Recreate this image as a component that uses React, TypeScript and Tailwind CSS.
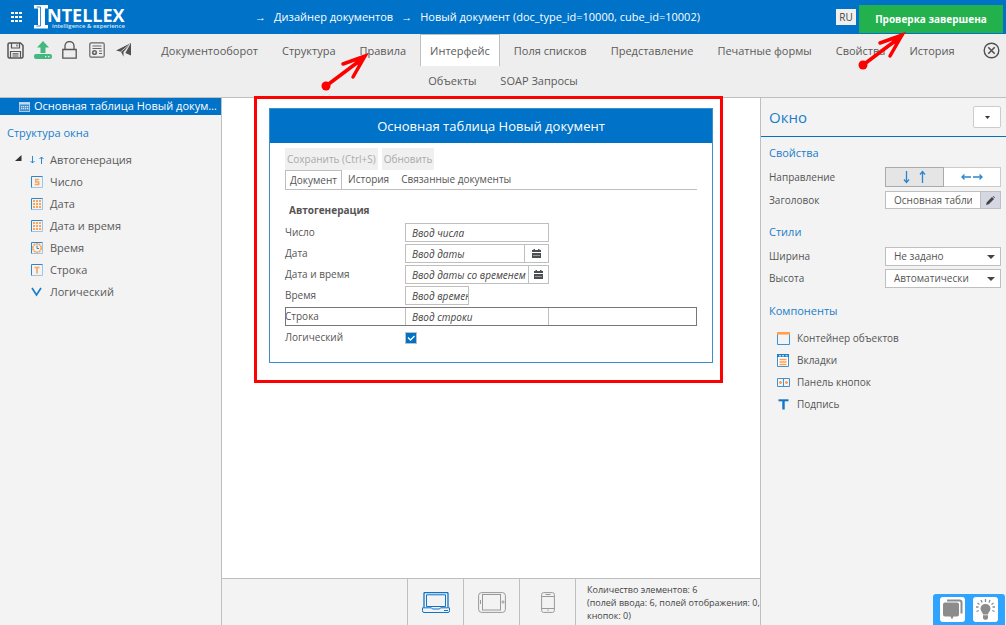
import type { ReactNode } from 'react';

type IconProps = { className?: string };

type TreeItem = { label: string; icon: ReactNode };

function AppsIcon() {
  return (
    <svg width="12" height="10" viewBox="0 0 12 10" fill="#fff" aria-hidden="true">
      {[0, 4, 8].map((x) => [0, 4, 8].map((y) => <rect key={`${x}-${y}`} x={x} y={y} width="3" height="2" />))}
    </svg>
  );
}

function Logo() {
  return (
    <svg width="93" height="26" viewBox="0 0 93 26" role="img" aria-label="Intellex" className="shrink-0">
      <path d="M0 1h14v3.500h-3v16.500h3v3.500H0v-3.500h4V4.500H0z" fill="#fff" />
      <path d="M2.500 3h4v19h-4" fill="none" stroke="#0072c8" strokeWidth="0.800" />
      <text x="13" y="18" fill="#fff" fontFamily="'Open Sans', sans-serif" fontWeight="700" fontSize="18">
        NTELLEX
      </text>
      <text x="18" y="24" fill="#d5e8f7" fontFamily="'Open Sans', sans-serif" fontWeight="600" fontSize="6">
        intelligence &amp; experience
      </text>
    </svg>
  );
}

function SaveIcon() {
  return (
    <svg width="17" height="17" viewBox="0 0 17 17" fill="none" stroke="#555" strokeWidth="1.5" aria-hidden="true">
      <path d="M1 2.500a1.500 1.500 0 0 1 1.500-1.500h11L16 3.500v11a1.500 1.500 0 0 1-1.500 1.500h-12A1.500 1.500 0 0 1 1 14.500z" />
      <path d="M4.500 1v5h8V1M10 2.500v2M3.500 16V9.500h10V16M5.500 11.800h6M5.500 14h6" strokeWidth="1.200" />
    </svg>
  );
}

function UploadIcon() {
  return (
    <svg width="18" height="18" viewBox="0 0 18 18" fill="#43b97f" aria-hidden="true">
      <path d="M9 0l6 6.500h-3.500V12h-5V6.500H3z" />
      <rect x="0" y="13" width="18" height="5" rx="2" />
      <path d="M11 15h1.500v1.200H11zM14 15h1.500v1.200H14z" fill="#eee" />
    </svg>
  );
}

function LockIcon() {
  return (
    <svg width="15" height="18" viewBox="0 0 15 18" fill="none" stroke="#555" strokeWidth="1.300" aria-hidden="true">
      <path d="M0.800 8.500h13.400v8.700H0.800zM3 8.500V5a4.500 4.500 0 0 1 9 0v3.500" />
    </svg>
  );
}

function CertificateIcon() {
  return (
    <svg width="16" height="16" viewBox="0 0 16 16" fill="none" stroke="#666" strokeWidth="1.200" aria-hidden="true">
      <rect x="0.800" y="0.800" width="14.400" height="14.400" rx="1.500" />
      <path d="M3.500 4h9M3.500 6.500h9M10 9h3M10 11.500h3" />
      <circle cx="5.500" cy="10.500" r="1.800" strokeWidth="1.600" />
    </svg>
  );
}

function SendIcon() {
  return (
    <svg width="15" height="14" viewBox="0 0 15 14" aria-hidden="true">
      <path d="M15 0v12.500L9.300 10 15 0 7.500 9v4.800L5 8.800 0 7.500z" fill="#505050" />
      <path d="M5 8.600L14 1" stroke="#eee" strokeWidth="0.800" />
    </svg>
  );
}

function CloseIcon() {
  return (
    <svg width="17" height="17" viewBox="0 0 17 17" fill="none" stroke="#505050" strokeWidth="1.400" aria-hidden="true">
      <circle cx="8.500" cy="8.500" r="7.300" />
      <path d="M5.300 5.300l6.400 6.400M11.700 5.300l-6.400 6.400" strokeWidth="1.600" />
    </svg>
  );
}

function Pointer({ className }: IconProps) {
  return (
    <svg width="52" height="42" viewBox="0 0 52 42" className={className} aria-hidden="true">
      <circle cx="6" cy="36" r="4.500" fill="#f00" />
      <path d="M6 36L42 9M23 14L45 6 33 27" fill="none" stroke="#f00" strokeWidth="3.500" strokeLinecap="round" />
      <path d="M48 4L33 9l6 8z" fill="#f00" />
    </svg>
  );
}

function FieldBox({ children }: { children?: ReactNode }) {
  return (
    <svg width="12" height="12" viewBox="0 0 12 12" fill="none" aria-hidden="true">
      <path d="M11.500 0.500v11h-11" stroke="#9cc6e8" />
      <path d="M0.500 11.500v-11h11" stroke="#2a86cf" />
      {children}
    </svg>
  );
}

function DotsIcon() {
  return (
    <FieldBox>
      {[2, 5, 8].map((x) => [2, 5, 8].map((y) => <rect key={`${x}-${y}`} x={x} y={y} width="2" height="2" fill="#f9a65a" />))}
    </FieldBox>
  );
}

function NumberIcon() {
  return (
    <FieldBox>
      <path d="M8.200 3.500H4.700v2.500h3v2.500H3.800" stroke="#f9a65a" strokeWidth="1.500" />
    </FieldBox>
  );
}

function ClockIcon() {
  return (
    <FieldBox>
      <circle cx="6" cy="6" r="4.200" stroke="#f9a65a" strokeWidth="1.800" strokeDasharray="2 0.600" />
      <path d="M6 3.500V6.500h2" stroke="#2a86cf" />
    </FieldBox>
  );
}

function StringIcon() {
  return (
    <FieldBox>
      <path d="M3.500 3.500h5M6 3v6.500" stroke="#f9a65a" strokeWidth="1.700" />
    </FieldBox>
  );
}

function CheckVIcon() {
  return (
    <svg width="12" height="12" viewBox="0 0 12 12" fill="none" stroke="#1a7ecb" strokeWidth="1.700" aria-hidden="true">
      <path d="M1 2l4.500 7L10 2" />
    </svg>
  );
}

function TableIcon() {
  return (
    <svg width="11" height="10" viewBox="0 0 11 10" className="shrink-0" aria-hidden="true">
      <rect x="0.500" y="0.500" width="10" height="9" fill="#3d8fd2" stroke="#a9c9e8" />
      <path d="M0 1.500h11" stroke="#c9dcef" strokeWidth="2" />
      {[2, 4, 6, 8].map((x) => [4, 6].map((y) => <rect key={`${x}-${y}`} x={x} y={y} width="1.300" height="1.300" fill="#cfe2f3" />))}
    </svg>
  );
}

function CalendarIcon() {
  return (
    <svg width="9" height="10" viewBox="0 0 9 10" fill="#4a4f52" aria-hidden="true">
      <path d="M1.500 0h1.500v1h3V0h1.500v1H9v2H0V1h1.500zM0 4h9v5H0z" />
      <path d="M1 6.500h7" stroke="#ccc" strokeWidth="0.600" />
    </svg>
  );
}

function ContainerIcon() {
  return (
    <svg width="13" height="13" viewBox="0 0 13 13" fill="none" aria-hidden="true">
      <path d="M0.500 2v10.500h12V2" stroke="#3d92d5" />
      <path d="M0 1.300h13" stroke="#ff9f4f" strokeWidth="2.600" />
    </svg>
  );
}

function TabsIcon() {
  return (
    <svg width="13" height="13" viewBox="0 0 13 13" fill="none" aria-hidden="true">
      <path d="M0.500 0.500h11v12h-11z" stroke="#3d92d5" fill="#fff" />
      <path d="M0 1.500h12" stroke="#1a7ecb" strokeWidth="3" />
      <path d="M2 1.800h2M5 1.800h2M8.500 1.800h2" stroke="#fff" />
      <path d="M2.500 5.500h7M2.500 8h7M2.500 10.500h7" stroke="#ff9f4f" strokeWidth="1.300" />
    </svg>
  );
}

function ButtonsIcon() {
  return (
    <svg width="13" height="9" viewBox="0 0 13 9" fill="none" stroke="#3d92d5" aria-hidden="true">
      <path d="M0.500 0.500h12v8h-12zM6.500 0.500v8" />
      <path d="M3.500 3v3M2 4.500h3M9.500 3v3M8 4.500h3" stroke="#ff9f4f" strokeWidth="1.600" />
    </svg>
  );
}

function CaptionIcon() {
  return (
    <svg width="13" height="11" viewBox="0 0 13 11" fill="none" stroke="#1274c7" aria-hidden="true">
      <path d="M1.500 1.300h10" strokeWidth="2" />
      <path d="M6.500 1v9.500" strokeWidth="2.400" />
    </svg>
  );
}

function LaptopIcon() {
  return (
    <svg width="28" height="21" viewBox="0 0 28 21" fill="none" stroke="#0f73c6" aria-hidden="true">
      <path d="M2 15.500v-14q0-1 1-1h22q1 0 1 1v14" strokeWidth="1.300" />
      <path d="M4.500 2.800h19v11.700h-19z" />
      <path d="M0.500 15.800h9l1 1.200h7l1-1.200h9v3q0 1.700-1.500 1.700H2q-1.500 0-1.500-1.700z" />
      <path d="M22 18.500h4" />
    </svg>
  );
}

function TabletIcon() {
  return (
    <svg width="28" height="21" viewBox="0 0 28 21" fill="none" stroke="#999" aria-hidden="true">
      <rect x="0.600" y="0.600" width="26.800" height="19.800" rx="3" />
      <rect x="4.500" y="2.500" width="18" height="15.500" />
      <path d="M2.500 8v4" />
      <circle cx="25" cy="10" r="1.100" />
    </svg>
  );
}

function PhoneIcon() {
  return (
    <svg width="14" height="21" viewBox="0 0 14 21" fill="none" stroke="#999" aria-hidden="true">
      <rect x="0.600" y="0.600" width="12.800" height="19.800" rx="2" />
      <path d="M1 4.500h12M1 16.500h12M4.500 2.500h5M7 17.500v1.500" />
    </svg>
  );
}

function ChatIcon() {
  return (
    <svg width="23" height="23" viewBox="0 0 23 23" aria-hidden="true">
      <path d="M6 2.500h12.500q2 0 2 2v11" fill="none" stroke="#8c8c8c" strokeWidth="2" />
      <path d="M4 4.500h12q2 0 2 2v10q0 2-2 2h-3.500L11 21.500 9.500 18.500H4q-2 0-2-2v-10q0-2 2-2z" fill="#8c8c8c" />
    </svg>
  );
}

function BulbIcon() {
  return (
    <svg width="23" height="23" viewBox="0 0 23 23" aria-hidden="true">
      <path d="M11.500 6a4.800 4.800 0 0 1 5 4.800c0 2.500-2.300 3.400-2.500 5.700H9c-0.200-2.300-2.500-3.200-2.500-5.700a4.800 4.800 0 0 1 5-4.800zM9 17.200h5v3.300l-1.500 1.300h-2L9 20.500z" fill="#8c8c8c" />
      <path d="M11.500 1v3M7 2l1 2.500M16 2l-1 2.500M3.500 5l2 1.500M19.500 5l-2 1.500M2 9h2.500M18.500 9H21M2.500 13.500l2.200-1M20.500 13.500l-2.200-1" stroke="#8c8c8c" strokeWidth="1.300" />
    </svg>
  );
}

const tabs = [
  'Документооборот',
  'Структура',
  'Правила',
  'Интерфейс',
  'Поля списков',
  'Представление',
  'Печатные формы',
  'Свойства',
  'История',
];

const tree: TreeItem[] = [
  { label: 'Число', icon: <NumberIcon /> },
  { label: 'Дата', icon: <DotsIcon /> },
  { label: 'Дата и время', icon: <DotsIcon /> },
  { label: 'Время', icon: <ClockIcon /> },
  { label: 'Строка', icon: <StringIcon /> },
  { label: 'Логический', icon: <CheckVIcon /> },
];

const components: TreeItem[] = [
  { label: 'Контейнер объектов', icon: <ContainerIcon /> },
  { label: 'Вкладки', icon: <TabsIcon /> },
  { label: 'Панель кнопок', icon: <ButtonsIcon /> },
  { label: 'Подпись', icon: <CaptionIcon /> },
];

const tools = [
  { label: 'Сохранить', icon: <SaveIcon /> },
  { label: 'Загрузить', icon: <UploadIcon /> },
  { label: 'Заблокировать', icon: <LockIcon /> },
  { label: 'Сертификат', icon: <CertificateIcon /> },
  { label: 'Отправить', icon: <SendIcon /> },
];

function Header() {
  return (
    <header className="relative flex h-[34px] items-center bg-[#0072c8] text-white">
      <button type="button" aria-label="Меню" className="mr-[11px] ml-[11px]">
        <AppsIcon />
      </button>
      <Logo />
      <nav className="flex flex-1 justify-center gap-2 pr-2 text-[11px] font-medium whitespace-nowrap">
        <span>→</span>
        <a href="#designer">Дизайнер документов</a>
        <span>→</span>
        <a href="#document">Новый документ (doc_type_id=10000, cube_id=10002)</a>
      </nav>
      <button type="button" className="mr-[150px] h-4 w-5 bg-[#f0f0f0] text-[10px] leading-4 text-[#444]">
        RU
      </button>
      <div role="status" className="absolute top-[5px] right-[3px] flex h-7 w-36 items-center justify-center bg-[#22b14c] text-[10px] font-bold whitespace-nowrap">
        Проверка завершена
      </div>
    </header>
  );
}

function Toolbar() {
  return (
    <div className="border-b border-[#bfbfbf] bg-[#eee] text-[11px] whitespace-nowrap text-[#5a5a5a]">
      <div className="flex h-8 items-center">
        <div className="flex w-[140px] shrink-0 items-center pl-[2px]">
          {tools.map((tool) => (
            <button key={tool.label} type="button" aria-label={tool.label} className="flex w-[27px] justify-center">
              {tool.icon}
            </button>
          ))}
        </div>
        <ul className="flex flex-1 justify-center gap-1">
          {tabs.map((tab) => (
            <li key={tab} className="relative">
              <a
                href={`#${tab}`}
                className={
                  tab === 'Интерфейс'
                    ? 'flex h-8 items-center border border-b-0 border-[#bfbfbf] bg-white px-[9px] pt-px'
                    : 'flex h-8 items-center px-[10px] pt-[2px]'
                }
              >
                {tab}
              </a>
              {tab === 'Правила' && <Pointer className="pointer-events-none absolute top-[16px] left-[-30px] z-10" />}
              {tab === 'Свойства' && <Pointer className="pointer-events-none absolute top-[-5px] left-[31px] z-10" />}
            </li>
          ))}
        </ul>
        <button type="button" aria-label="Закрыть" className="flex w-[30px] shrink-0 justify-center">
          <CloseIcon />
        </button>
      </div>
      <div className="flex h-[31px] items-center justify-center gap-6">
        <a href="#objects">Объекты</a>
        <a href="#soap">SOAP Запросы</a>
      </div>
    </div>
  );
}

function Sidebar() {
  return (
    <aside className="w-[222px] shrink-0 border-r border-[#bfbfbf] bg-[#f3f3f3] text-[11px]">
      <div className="flex h-[17px] items-center gap-1 bg-[#0072c8] pl-[19px] text-white">
        <TableIcon />
        <span className="truncate">Основная таблица Новый документ</span>
      </div>
      <h2 className="mt-2 pl-[7px] leading-5 text-[#1a7ecb]">Структура окна</h2>
      <ul className="mt-[6px] text-[#5a5a5a]">
        <li className="flex h-[22px] items-center pl-[15px]">
          <svg width="7" height="7" viewBox="0 0 7 7" className="mb-1" aria-hidden="true">
            <path d="M6.500 0v6H0z" fill="#333" />
          </svg>
          <svg width="14" height="8" viewBox="0 0 14 8" className="mr-[6px] ml-2" fill="none" stroke="#2a86cf" aria-hidden="true">
            <path d="M2.500 0v7M0.500 5l2 2 2-2M11.500 8V1M9.500 3l2-2 2 2" />
          </svg>
          Автогенерация
        </li>
        {tree.map((item) => (
          <li key={item.label} className="flex h-[22px] items-center gap-[7px] pl-[31px]">
            {item.icon}
            {item.label}
          </li>
        ))}
      </ul>
    </aside>
  );
}

const inputClass = 'h-[19px] border border-[#bfbfbf] bg-white pl-[6px] italic placeholder:text-[#444] placeholder:opacity-100';

function DateField({ id, placeholder, narrow }: { id: string; placeholder: string; narrow?: boolean }) {
  return (
    <div className="flex w-36">
      <input id={id} placeholder={placeholder} className={`${inputClass} min-w-0 flex-1`} />
      <button
        type="button"
        aria-label="Выбрать дату"
        className={`flex h-[19px] items-center justify-center border border-l-0 border-[#bfbfbf] ${narrow ? 'w-5' : 'w-6'}`}
      >
        <CalendarIcon />
      </button>
    </div>
  );
}

function FormRow({ id, label, children }: { id: string; label: string; children: ReactNode }) {
  return (
    <div className="flex h-[19px] items-center">
      <label htmlFor={id} className="w-[120px] shrink-0">
        {label}
      </label>
      {children}
    </div>
  );
}

function FormPreview() {
  return (
    <div className="relative mx-[47px] mt-[10px] border border-[#3a8fd0] text-[10px] text-[#555]">
      {/* selection frame around the whole window */}
      <div className="pointer-events-none absolute -top-[13px] -right-[11px] -bottom-[21px] -left-4 border-[3px] border-[#f00]" />
      <h1 className="flex h-[34px] items-center justify-center bg-[#0072c8] pt-[2px] text-[13px] text-white">
        Основная таблица Новый документ
      </h1>
      <div className="px-[15px] pt-[5px] pb-[15px]">
        <div className="flex gap-1">
          <button type="button" disabled className="h-[22px] bg-[#f0f0f0] px-[2px] text-[#aaa]">
            Сохранить (Ctrl+S)
          </button>
          <button type="button" disabled className="h-[22px] bg-[#f0f0f0] px-[2px] text-[#aaa]">
            Обновить
          </button>
        </div>
        <div className="flex h-5 items-stretch border-b border-[#bfbfbf]">
          <button type="button" className="border border-b-0 border-[#bfbfbf] px-1">
            Документ
          </button>
          <button type="button" className="px-[6px]">
            История
          </button>
          <button type="button" className="px-[6px]">
            Связанные документы
          </button>
        </div>
        <h2 className="mt-3 mb-1 pl-1 leading-[17px] font-bold">Автогенерация</h2>
        <form className="flex flex-col gap-[2px]">
          <FormRow id="number" label="Число">
            <input id="number" placeholder="Ввод числа" className={`${inputClass} w-36`} />
          </FormRow>
          <FormRow id="date" label="Дата">
            <DateField id="date" placeholder="Ввод даты" />
          </FormRow>
          <FormRow id="datetime" label="Дата и время">
            <DateField id="datetime" placeholder="Ввод даты со временем" narrow />
          </FormRow>
          <FormRow id="time" label="Время">
            <input id="time" placeholder="Ввод времени" className={`${inputClass} w-16`} />
          </FormRow>
          <div className="outline-1 -outline-offset-1 outline-[#777]">
            <FormRow id="string" label="Строка">
              <input id="string" placeholder="Ввод строки" className={`${inputClass} w-36`} />
            </FormRow>
          </div>
          <FormRow id="bool" label="Логический">
            <span className="relative flex">
              <input
                id="bool"
                type="checkbox"
                defaultChecked
                className="peer h-3 w-3 appearance-none border border-[#bfbfbf] bg-white checked:bg-[#0072c8]"
              />
              <svg viewBox="0 0 12 12" className="pointer-events-none absolute inset-0 hidden peer-checked:block" fill="none" stroke="#fff" aria-hidden="true">
                <path d="M3 5.500l2.500 2.500 4-4" strokeWidth="1.300" />
              </svg>
            </span>
          </FormRow>
        </form>
      </div>
    </div>
  );
}

function DeviceBar() {
  return (
    <footer className="flex h-[47px] border-t border-[#bfbfbf] bg-[#f3f3f3]">
      <div className="flex-1" />
      <button type="button" aria-label="Компьютер" className="flex w-14 items-center justify-center border-l border-[#bfbfbf]">
        <LaptopIcon />
      </button>
      <button type="button" aria-label="Планшет" className="flex w-14 items-center justify-center border-l border-[#bfbfbf]">
        <TabletIcon />
      </button>
      <button type="button" aria-label="Телефон" className="flex w-14 items-center justify-center border-l border-[#bfbfbf]">
        <PhoneIcon />
      </button>
      <p className="w-[185px] border-l border-[#bfbfbf] pt-1 pl-[11px] text-[9px] leading-[13px] text-[#444]">
        Количество элементов: 6<br />
        (полей ввода: 6, полей отображения: 0, кнопок: 0)
      </p>
    </footer>
  );
}

function SelectRow({ id, label, value }: { id: string; label: string; value: string }) {
  return (
    <div className="flex h-[19px] items-center justify-between">
      <label htmlFor={id}>{label}</label>
      <div className="relative">
        <select id={id} className="block h-[19px] w-[116px] appearance-none border border-[#bfbfbf] bg-white pl-2">
          <option>{value}</option>
        </select>
        <svg width="8" height="4" viewBox="0 0 8 4" className="pointer-events-none absolute top-2 right-[6px]" fill="#444" aria-hidden="true">
          <path d="M0 0h8L4 4z" />
        </svg>
      </div>
    </div>
  );
}

function PropertiesPanel() {
  return (
    <aside className="w-[246px] shrink-0 border-l border-[#bfbfbf] bg-[#f3f3f3] text-[10px] text-[#555]">
      <div className="flex h-[39px] items-center justify-between border-b border-[#0072c8] pr-[5px] pl-2">
        <h2 className="text-[15px] text-[#1a7ecb]">Окно</h2>
        <button type="button" aria-label="Меню окна" className="flex h-[22px] w-7 items-center justify-center rounded-[2px] border border-[#ccc] bg-white">
          <svg width="5" height="3" viewBox="0 0 5 3" fill="#333" aria-hidden="true">
            <path d="M0 0h5L2.500 3z" />
          </svg>
        </button>
      </div>
      <div className="pr-[5px] pl-2">
        <h3 className="mt-[6px] text-[11px] leading-5 text-[#1a7ecb]">Свойства</h3>
        <div className="mt-1 flex items-center justify-between">
          <span>Направление</span>
          <div className="flex w-[116px]">
            <button type="button" aria-label="Вертикально" className="flex h-5 flex-1 items-center justify-center border border-[#aaa] bg-[#e5e5e5]">
              <svg width="23" height="14" viewBox="0 0 23 14" fill="none" stroke="#2a86cf" strokeWidth="1.300" aria-hidden="true">
                <path d="M3.500 1v11.500M1 9.500l2.500 3 2.500-3M19.500 13V1.500M17 4.500l2.500-3 2.500 3" />
              </svg>
            </button>
            <button type="button" aria-label="Горизонтально" className="flex h-5 flex-1 items-center justify-center border border-l-0 border-[#ccc] bg-white">
              <svg width="22" height="6" viewBox="0 0 22 6" fill="none" stroke="#2a86cf" strokeWidth="1.300" aria-hidden="true">
                <path d="M10 3H1M3.500 0.500L1 3l2.500 2.500M12 3h9M18.500 0.500L21 3l-2.500 2.500" />
              </svg>
            </button>
          </div>
        </div>
        <div className="mt-1 flex items-center justify-between">
          <label htmlFor="title">Заголовок</label>
          <div className="flex w-[116px]">
            <input id="title" defaultValue="Основная таблица Новый документ" className="h-[18px] min-w-0 flex-1 border border-[#bfbfbf] bg-white px-2" />
            <button type="button" aria-label="Изменить" className="flex h-[18px] w-5 items-center justify-center border border-l-0 border-[#bfbfbf] bg-[#d5d8e3]">
              <svg width="9" height="9" viewBox="0 0 9 9" fill="#444" aria-hidden="true">
                <path d="M0 9l0.800-2.800L6 1l2 2-5.200 5.200zM6.700 0.500L7.300 0 9 1.700 8.500 2.300z" />
              </svg>
            </button>
          </div>
        </div>
        <h3 className="mt-[13px] mb-[5px] text-[11px] leading-5 text-[#1a7ecb]">Стили</h3>
        <div className="flex flex-col gap-[3px]">
          <SelectRow id="width" label="Ширина" value="Не задано" />
          <SelectRow id="height" label="Высота" value="Автоматически" />
        </div>
        <h3 className="mt-[13px] text-[11px] leading-5 text-[#1a7ecb]">Компоненты</h3>
        <ul className="mt-[6px] pl-2">
          {components.map((item) => (
            <li key={item.label} className="flex h-[22px] items-center gap-[7px]">
              {item.icon}
              {item.label}
            </li>
          ))}
        </ul>
      </div>
    </aside>
  );
}

export default function App() {
  return (
    <div className="relative flex min-h-screen flex-col bg-white font-['Open_Sans','Noto_Sans',sans-serif]">
      <Header />
      <Toolbar />
      <div className="flex flex-1">
        <Sidebar />
        <main className="flex min-w-0 flex-1 flex-col">
          <div className="flex-1">
            <FormPreview />
          </div>
          <DeviceBar />
        </main>
        <PropertiesPanel />
      </div>
      <div className="absolute right-px bottom-0 flex h-[31px] w-[72px] items-center justify-center gap-2 rounded-t-[3px] bg-[#2ea3ff]">
        <button type="button" aria-label="Чат" className="flex h-[25px] w-[25px] items-center justify-center rounded-[3px] bg-white">
          <ChatIcon />
        </button>
        <button type="button" aria-label="Подсказки" className="flex h-[25px] w-[25px] items-center justify-center rounded-[3px] bg-white">
          <BulbIcon />
        </button>
      </div>
    </div>
  );
}
